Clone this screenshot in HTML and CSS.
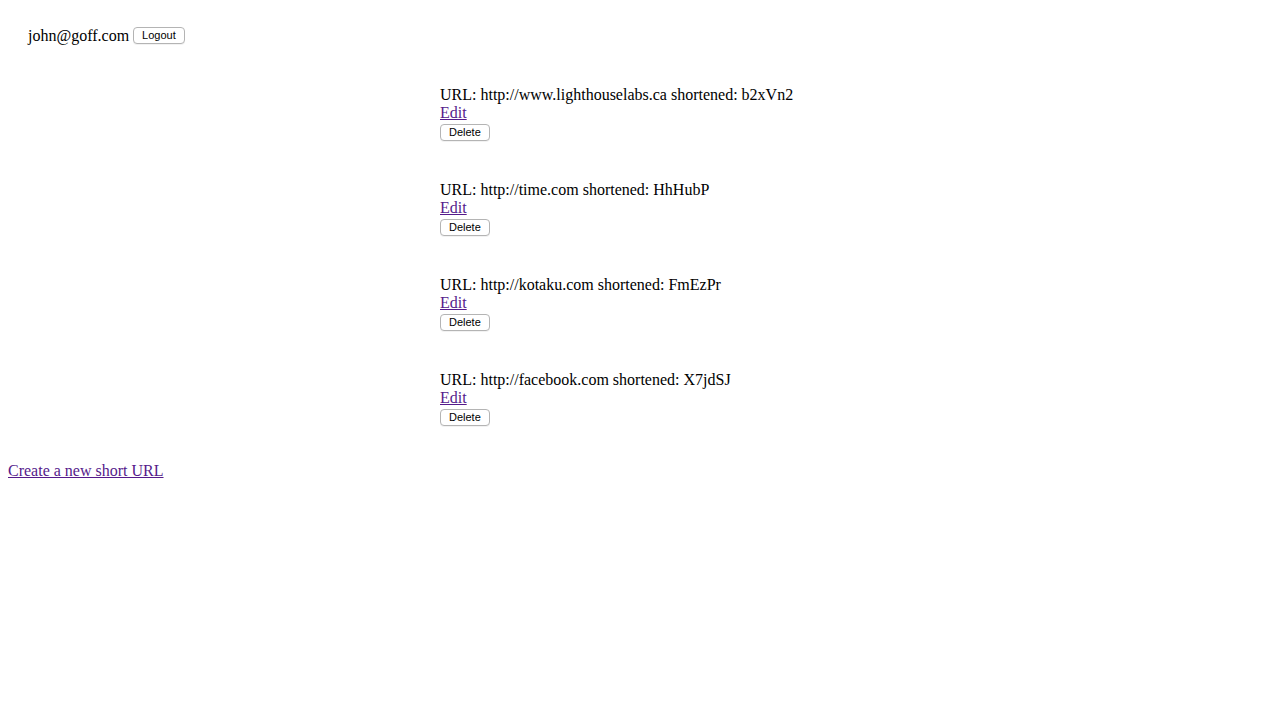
FILE: index.html
```html
<!DOCTYPE html>
<html>
<head>
<meta charset="utf-8">
<link rel="stylesheet" href="styles.css">
</head>
<body>
<header class="header">
  <span class="user">john@goff.com</span>
  <button class="btn">Logout</button>
</header>
<main class="list">
  <div class="item">
    <div>URL: http://www.lighthouselabs.ca shortened: b2xVn2</div>
    <a class="link" href="#">Edit</a>
    <div><button class="btn">Delete</button></div>
  </div>
  <div class="item">
    <div>URL: http://time.com shortened: HhHubP</div>
    <a class="link" href="#">Edit</a>
    <div><button class="btn">Delete</button></div>
  </div>
  <div class="item">
    <div>URL: http://kotaku.com shortened: FmEzPr</div>
    <a class="link" href="#">Edit</a>
    <div><button class="btn">Delete</button></div>
  </div>
  <div class="item">
    <div>URL: http://facebook.com shortened: X7jdSJ</div>
    <a class="link" href="#">Edit</a>
    <div><button class="btn">Delete</button></div>
  </div>
</main>
<a class="link create" href="#">Create a new short URL</a>
</body>
</html>
```
FILE: styles.css
```css
html, body {
  background: #fff;
}
body {
  margin: 8px;
  font-family: "Liberation Serif", "Times New Roman", serif;
  font-size: 16px;
  line-height: 18px;
  color: #000;
}
.header {
  padding: 17px 20px 0 20px;
  height: 21px;
  display: flex;
  align-items: center;
  gap: 4px;
}
.btn {
  font-family: "Liberation Sans", Arial, sans-serif;
  font-size: 11px;
  line-height: 13px;
  height: 17px;
  padding: 0 8px;
  margin: 0;
  background: #fff;
  color: #000;
  border: 1px solid #b4b4b4;
  border-radius: 4px;
  box-shadow: 0 1px 0 rgba(0,0,0,0.05);
}
.list {
  margin: 40px 0 0 432px;
  display: flex;
  flex-direction: column;
  gap: 40px;
}
.item {
  display: flex;
  flex-direction: column;
  align-items: flex-start;
  height: 55px;
}
.item .btn {
  margin-top: 1px;
}
.link {
  color: #551a8b;
  text-decoration: underline;
}
.create {
  display: block;
  margin-top: 36px;
  width: max-content;
}
```
